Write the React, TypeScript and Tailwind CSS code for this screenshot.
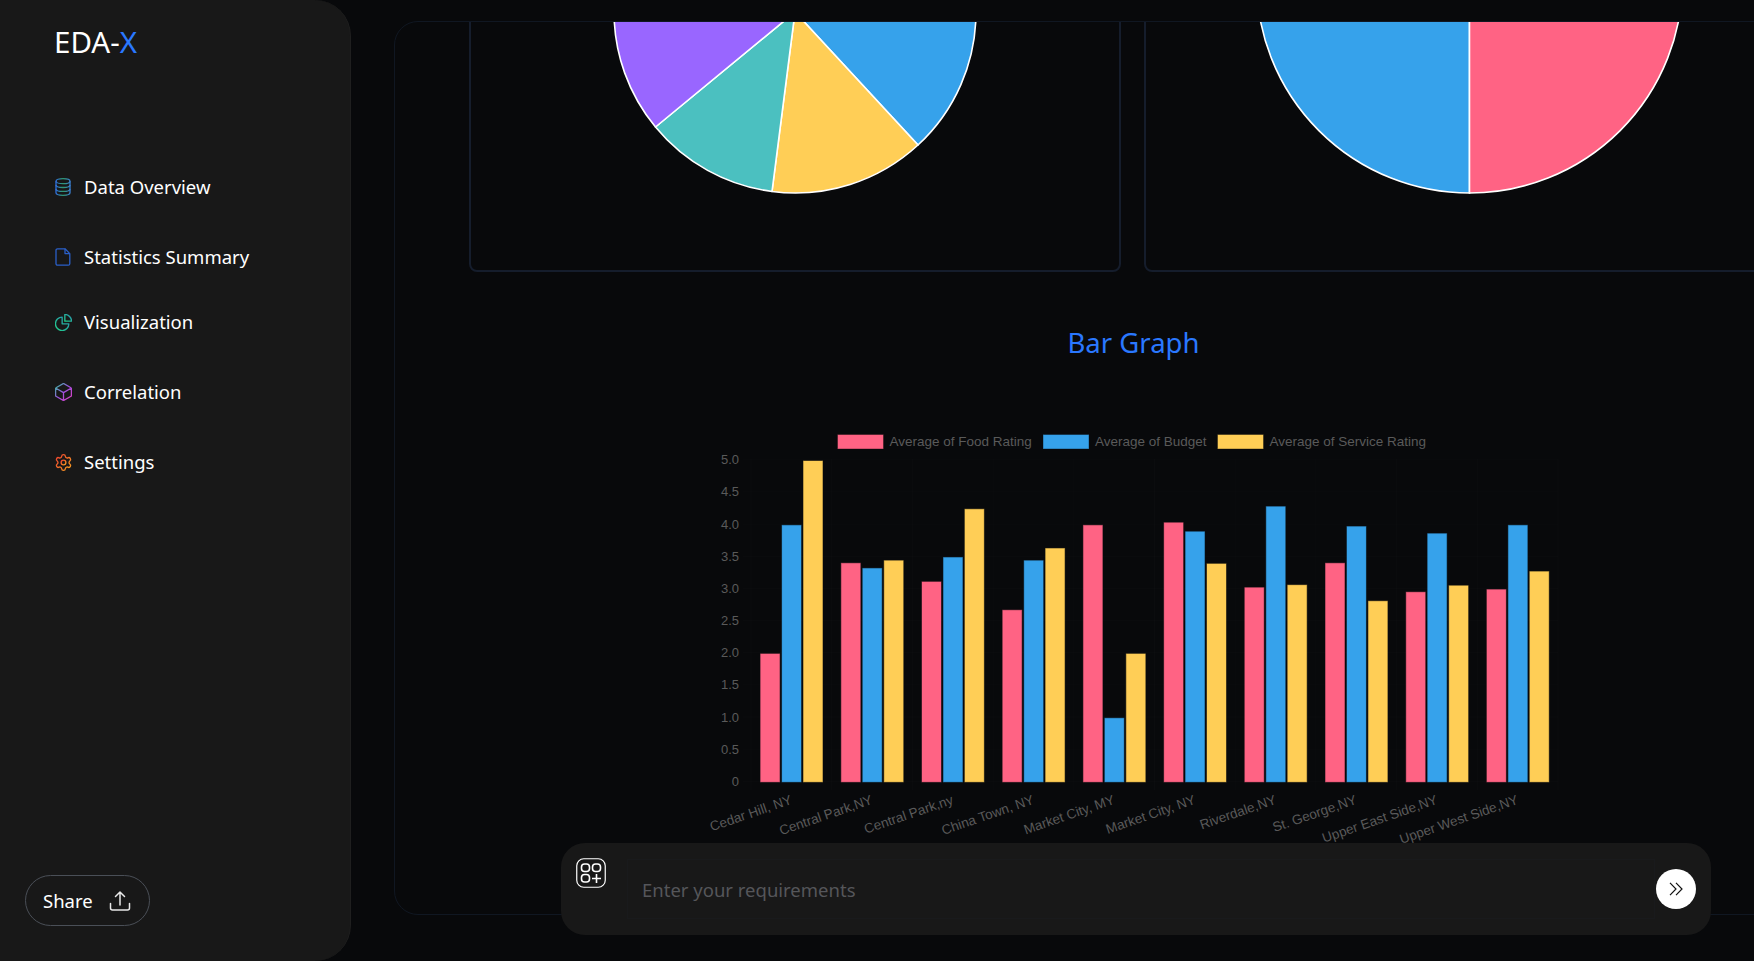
import React from 'react';
import { Settings } from 'lucide-react';

const PINK = '#FF6384';
const BLUE = '#36A2EB';
const YELLOW = '#FFCE56';
const TEAL = '#4BC0C0';
const PURPLE = '#9966FF';

// Chart data, read off the reference
const groups = [
  { label: 'Cedar Hill, NY', values: [2.0, 4.0, 5.0] },
  { label: 'Central Park,NY', values: [3.41, 3.33, 3.45] },
  { label: 'Central Park,ny', values: [3.12, 3.5, 4.25] },
  { label: 'China Town, NY', values: [2.68, 3.45, 3.64] },
  { label: 'Market City, MY', values: [4.0, 1.0, 2.0] },
  { label: 'Market City, NY', values: [4.04, 3.9, 3.4] },
  { label: 'Riverdale,NY', values: [3.03, 4.29, 3.07] },
  { label: 'St. George,NY', values: [3.41, 3.98, 2.82] },
  { label: 'Upper East Side,NY', values: [2.96, 3.87, 3.06] },
  { label: 'Upper West Side,NY', values: [3.0, 4.0, 3.28] },
];

const legend = [
  { label: 'Average of Food Rating', color: PINK, x: 838.5, textX: 890 },
  { label: 'Average of Budget', color: BLUE, x: 1044, textX: 1095.5 },
  { label: 'Average of Service Rating', color: YELLOW, x: 1218.5, textX: 1270 },
];

const ticks = ['0', '0.5', '1.0', '1.5', '2.0', '2.5', '3.0', '3.5', '4.0', '4.5', '5.0'];
const colors = [PINK, BLUE, YELLOW];
const ZERO_Y = 782.3;
const UNIT = 64.3;
const GROUP_X = 760.7;
const GROUP_STEP = 80.7;

const GradientDefs = () => (
  <svg className="absolute h-0 w-0">
    <defs>
      <linearGradient id="dbGrad" x1="0" y1="0" x2="1" y2="0">
        <stop offset="0" stopColor="#2f6fe0" />
        <stop offset="0.5" stopColor="#2f9a6c" />
        <stop offset="1" stopColor="#3a7fd0" />
      </linearGradient>
      <linearGradient id="pieGrad" x1="0" y1="1" x2="1" y2="0">
        <stop offset="0" stopColor="#20d08a" />
        <stop offset="1" stopColor="#2a8fb0" />
      </linearGradient>
      <linearGradient id="boxGrad" x1="0" y1="0" x2="1" y2="1">
        <stop offset="0" stopColor="#2fc49a" />
        <stop offset="0.5" stopColor="#a050e0" />
        <stop offset="1" stopColor="#e040c0" />
      </linearGradient>
      <linearGradient id="cogGrad" x1="0" y1="0" x2="1" y2="1">
        <stop offset="0" stopColor="#f04030" />
        <stop offset="1" stopColor="#f5a020" />
      </linearGradient>
    </defs>
  </svg>
);

const DatabaseIcon = () => (
  <svg width="16" height="18" viewBox="0 0 16 18" fill="none" stroke="url(#dbGrad)" strokeWidth="1.3">
    <ellipse cx="8" cy="3.2" rx="7" ry="2.5" />
    <path d="M1 3.2V14.8C1 16.2 4.1 17.3 8 17.3S15 16.2 15 14.8V3.2" />
    <path d="M1 7C1 8.4 4.1 9.5 8 9.5S15 8.4 15 7" />
    <path d="M1 10.9C1 12.3 4.1 13.4 8 13.4S15 12.3 15 10.9" />
  </svg>
);

const FileIcon = () => (
  <svg width="16" height="18" viewBox="0 0 16 18" fill="none" stroke="#2a5fc8" strokeWidth="1.3" strokeLinejoin="round">
    <path d="M2.5 .8H10L14.8 5.6V15.7A1.5 1.5 0 0 1 13.3 17.2H2.5A1.5 1.5 0 0 1 1 15.7V2.3A1.5 1.5 0 0 1 2.5 .8Z" />
    <path d="M10 .8V5.6H14.8" />
  </svg>
);

const PieIcon = () => (
  <svg width="17" height="17" viewBox="2.5 2.5 19 19" fill="none" stroke="url(#pieGrad)" strokeWidth="1.5" strokeLinejoin="round">
    <path d="M10.5 6a7.5 7.5 0 1 0 7.5 7.5h-7.5V6Z" />
    <path d="M13.5 10.5H21A7.5 7.5 0 0 0 13.5 3v7.5Z" />
  </svg>
);

const BoxIcon = () => (
  <svg width="17" height="18" viewBox="2.5 1.75 19 20.5" fill="none" stroke="url(#boxGrad)" strokeWidth="1.5" strokeLinejoin="round">
    <path d="m21 7.5-9-5.25L3 7.5m18 0-9 5.25m9-5.25v9l-9 5.25M3 7.5l9 5.25M3 7.5v9l9 5.25m0-9v9" />
  </svg>
);

const CogIcon = () => <Settings size={19} stroke="url(#cogGrad)" strokeWidth={1.7} className="-ml-px" />;

const navItems = [
  { label: 'Data Overview', icon: <DatabaseIcon />, spacing: 'mt-0' },
  { label: 'Statistics Summary', icon: <FileIcon />, spacing: 'mt-[38px]' },
  { label: 'Visualization', icon: <PieIcon />, spacing: 'mt-[33px]' },
  { label: 'Correlation', icon: <BoxIcon />, spacing: 'mt-[38px]' },
  { label: 'Settings', icon: <CogIcon />, spacing: 'mt-[38px]' },
];

// Pie slice from the centre out to two points on the rim
const slice = (cx: number, cy: number, r: number, a: number[], b: number[]) =>
  `M${cx} ${cy}L${a[0]} ${a[1]}A${r} ${r} 0 0 1 ${b[0]} ${b[1]}Z`;

const LeftPie = () => (
  <svg width="648" height="746" viewBox="471 -476 648 746" className="block">
    <g stroke="#fff" strokeWidth="1.6" strokeLinejoin="round">
      <path d={slice(795, 12, 181, [976, 12], [918, 145])} fill={BLUE} />
      <path d={slice(795, 12, 181, [918, 145], [772, 191.5])} fill={YELLOW} />
      <path d={slice(795, 12, 181, [772, 191.5], [655.5, 127])} fill={TEAL} />
      <path d={slice(795, 12, 181, [655.5, 127], [614, 12])} fill={PURPLE} />
    </g>
  </svg>
);

const RightPie = () => (
  <svg width="648" height="746" viewBox="1146 -476 648 746" className="block">
    <g stroke="#fff" strokeWidth="1.6">
      <path d="M1469.5 -20V193A213 213 0 0 1 1256.5 -20Z" fill={BLUE} />
      <path d="M1469.5 -20H1682.5A213 213 0 0 1 1469.5 193Z" fill={PINK} />
    </g>
  </svg>
);

const BarChart = () => (
  <svg width="900" height="430" viewBox="684.5 420 900 430" className="mx-auto block" fontFamily="'Liberation Sans', Arial, sans-serif">
    <g stroke="#ffffff" strokeOpacity="0.015">
      {ticks.map((_, i) => (
        <line key={i} x1="743" x2="1559" y1={ZERO_Y - i * (UNIT / 2)} y2={ZERO_Y - i * (UNIT / 2)} />
      ))}
      {Array.from({ length: 11 }).map((_, i) => (
        <line key={i} x1={751.5 + i * GROUP_STEP} x2={751.5 + i * GROUP_STEP} y1="460" y2="791" />
      ))}
    </g>
    {legend.map((item) => (
      <g key={item.label}>
        <rect x={item.x} y="436" width="45" height="13.5" fill={item.color} stroke={item.color} strokeOpacity="0.6" />
        <text x={item.textX} y="446.5" fontSize="13.5" fill="#5a5a5a">{item.label}</text>
      </g>
    ))}
    {ticks.map((tick, i) => (
      <text key={tick} x="739.5" y={ZERO_Y - i * (UNIT / 2) + 4.5} fontSize="13" fill="#5a5a5a" textAnchor="end">{tick}</text>
    ))}
    {groups.map((group, g) => (
      <g key={group.label}>
        {group.values.map((value, b) => (
          <rect
            key={b}
            x={GROUP_X + g * GROUP_STEP + b * 21.45 + 0.4}
            y={ZERO_Y - value * UNIT + 1.2}
            width="19"
            height={value * UNIT - 0.6}
            fill={colors[b]}
            stroke={colors[b]}
            strokeOpacity="0.45"
          />
        ))}
        <text
          transform={`translate(${GROUP_X + g * GROUP_STEP + 32.5} 804.5) rotate(-19)`}
          fontSize="13.5"
          fill="#5a5a5a"
          textAnchor="end"
        >
          {group.label}
        </text>
      </g>
    ))}
  </svg>
);

const App = () => {
  return (
    <div className="flex h-[961px] w-[1754px] overflow-hidden bg-[#08090b] font-['Noto_Sans',sans-serif] text-white">
      <GradientDefs />

      {/* Sidebar */}
      <aside className="flex h-full w-[351px] flex-none flex-col rounded-r-[36px] border-r border-[#1f1f1f] bg-[#181818]">
        <div className="ml-[54px] mt-[23px] text-[29.5px] leading-[38px]">
          EDA-<span className="text-[#2a78ff]">X</span>
        </div>
        <nav className="ml-[55px] mt-[110px] flex flex-col">
          {navItems.map((item) => (
            <div key={item.label} className={`flex h-[32px] items-center ${item.spacing}`}>
              <span className="flex w-[29px] flex-none items-center">{item.icon}</span>
              <span className="text-[18.5px] leading-[32px]">{item.label}</span>
            </div>
          ))}
        </nav>
        <button className="mb-[35px] ml-[25px] mt-auto flex h-[51px] w-[125px] items-center rounded-full border border-[#4a4f57] pl-[17px] text-[18.5px]">
          Share
          <svg width="22" height="22" viewBox="0 0 22 22" fill="none" stroke="#e8e8e8" strokeWidth="1.5" strokeLinecap="round" strokeLinejoin="round" className="ml-[16px]">
            <path d="M11 15V2M6.5 6.5 11 2l4.5 4.5" />
            <path d="M1.5 13.5V18A2 2 0 0 0 3.5 20H18.5A2 2 0 0 0 20.5 18V13.5" />
          </svg>
        </button>
      </aside>

      {/* Main */}
      <main className="relative h-full min-w-0 flex-1 pb-[46px] pl-[43px] pt-[21px]">
        <div className="h-full w-[1478px] overflow-hidden rounded-[24px] border border-[#101722] pl-[74px] pr-[73px]">
          <div className="-mt-[500px] flex gap-[23px]">
            <div className="h-[750px] w-[652px] flex-none overflow-hidden rounded-[8px] border-2 border-[#151d2c]">
              <LeftPie />
            </div>
            <div className="h-[750px] w-[652px] flex-none overflow-hidden rounded-[8px] border-2 border-[#151d2c]">
              <RightPie />
            </div>
          </div>
          <h2 className="mt-[51px] text-center text-[27.5px] font-normal leading-[40px] text-[#2a78ff]">Bar Graph</h2>
          <div className="mt-[56px]">
            <BarChart />
          </div>
        </div>

        {/* Prompt bar */}
        <div className="absolute bottom-[26px] left-[210px] flex h-[92px] w-[1150px] rounded-[24px] bg-[#181818]">
          <svg width="30" height="30" viewBox="0 0 30 30" fill="none" stroke="#fff" className="ml-[15px] mt-[15px] flex-none">
            <rect x=".75" y=".75" width="28.5" height="28.5" rx="7" strokeWidth="1.2" />
            <rect x="5.5" y="6" width="8" height="7.5" rx="3" strokeWidth="1.6" />
            <rect x="16.5" y="6" width="8" height="7.5" rx="3" strokeWidth="1.6" />
            <rect x="5.5" y="16.5" width="8" height="7.5" rx="3" strokeWidth="1.6" />
            <path d="M20.5 16V25M16 20.5H25" strokeWidth="1.6" />
          </svg>
          <input
            placeholder="Enter your requirements"
            className="ml-[21px] mt-[16px] h-[60px] w-[1028px] flex-none border border-[#191a1c] bg-transparent pl-[14px] text-[18.5px] outline-none placeholder:text-[#55565a]"
          />
          <button className="ml-px mt-[26px] flex h-[40px] w-[40px] flex-none items-center justify-center rounded-full bg-white">
            <svg width="14" height="14" viewBox="0 0 14 14" fill="none" stroke="#111" strokeWidth="1.2">
              <path d="M1 .8 7 7 1 13.2M7 .8 13 7 7 13.2" />
            </svg>
          </button>
        </div>
      </main>
    </div>
  );
};

export default App;
